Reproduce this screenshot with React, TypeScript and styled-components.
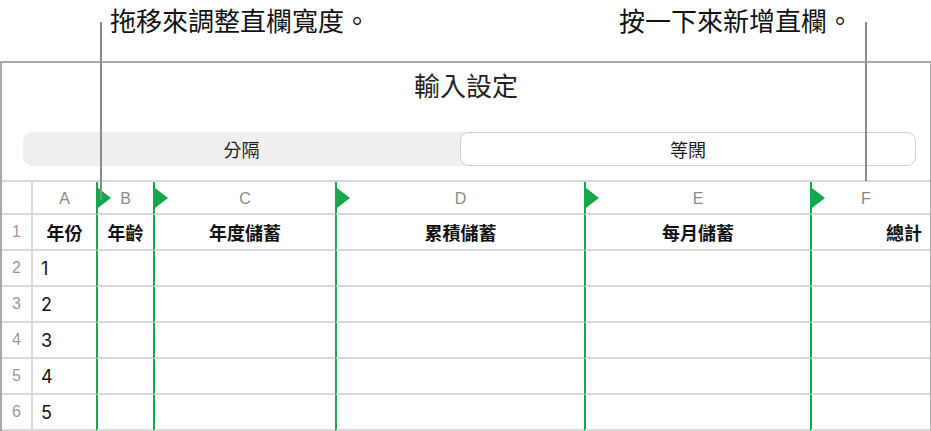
import { Fragment } from "react";
import styled, { createGlobalStyle } from "styled-components";

const GlobalStyle = createGlobalStyle`
  * {
    box-sizing: border-box;
  }
  body {
    margin: 0;
    background: #ffffff;
    font-family: "Inter", "Noto Sans CJK TC", sans-serif;
  }
`;

const CJK = `"Noto Sans CJK TC", "Noto Sans CJK SC", sans-serif`;
const GREEN = "#16a64b";
const GRID_LINE = "#d9d9d9";

const Page = styled.div`
  position: relative;
  width: 931px;
  height: 431px;
  overflow: hidden;
  display: flex;
  flex-direction: column;
`;

const Callouts = styled.div`
  height: 62px;
  display: flex;
  align-items: flex-start;
  justify-content: space-between;
  padding: 4px 78px 0 110px;
`;

const CalloutText = styled.div`
  font-family: ${CJK};
  font-size: 26px;
  line-height: 32px;
  color: #111;
`;

const Leader = styled.div<{ $left: number; $top: number; $height: number }>`
  position: absolute;
  left: ${p => p.$left}px;
  top: ${p => p.$top}px;
  width: 2px;
  height: ${p => p.$height}px;
  background: #8c8c8c;
  z-index: 5;
`;

const Panel = styled.div`
  flex: 1;
  display: flex;
  flex-direction: column;
  border-top: 2px solid #a9a9a9;
  border-left: 2px solid #a9a9a9;
  border-right: 1px solid #a9a9a9;
  background: #fff;
`;

const Title = styled.div`
  height: 69px;
  padding-top: 7px;
  text-align: center;
  font-family: ${CJK};
  font-size: 26px;
  line-height: 30px;
  color: #222;
`;

const Segmented = styled.div`
  margin: 0 14px 0 21px;
  height: 34px;
  display: grid;
  grid-template-columns: 437px 1fr;
  background: #efefef;
  border-radius: 9px;
`;

const Segment = styled.div<{ $active?: boolean }>`
  display: flex;
  align-items: center;
  justify-content: center;
  font-family: ${CJK};
  font-size: 18px;
  color: #1a1a1a;
  border-radius: 9px;
  background: ${p => (p.$active ? "#ffffff" : "transparent")};
  border: 1px solid ${p => (p.$active ? "#cfcfcf" : "transparent")};
`;

const Grid = styled.div`
  margin-top: 14px;
  border-top: 2px solid ${GRID_LINE};
  display: grid;
  grid-template-columns: 31px 63px 57px 182px 249px 226px 1fr;
  grid-template-rows: 33px 36px repeat(5, 36px);
`;

const Cell = styled.div<{ $marker?: boolean; $align?: "left" | "center" | "right" }>`
  position: relative;
  display: flex;
  align-items: center;
  justify-content: ${p =>
    p.$align === "left" ? "flex-start" : p.$align === "right" ? "flex-end" : "center"};
  padding: 0 8px;
  border-bottom: 2px solid ${GRID_LINE};
  border-left: ${p => (p.$marker ? `2px solid ${GREEN}` : "none")};
  min-width: 0;
  white-space: nowrap;
`;

const RowNum = styled(Cell)`
  padding: 0;
  border-right: 2px solid ${GRID_LINE};
  color: #999;
  font-family: "Liberation Sans", sans-serif;
  font-size: 16px;
`;

const ColLetter = styled(Cell)<{ $offset?: number }>`
  color: #8a8a8a;
  font-family: "Liberation Sans", sans-serif;
  font-size: 16px;
  padding-top: 2px;
  ${p => (p.$offset ? `justify-content: flex-start; padding-left: ${p.$offset}px;` : "")}
`;

const HeadLabel = styled(Cell)`
  font-family: ${CJK};
  font-weight: 700;
  font-size: 18px;
  color: #111;
`;

const Value = styled(Cell)`
  font-family: "Inter", sans-serif;
  font-size: 18px;
  color: #111;
  padding-left: 8px;
`;

// green resize handle on the left edge of each column header
const Handle = styled.span`
  position: absolute;
  left: 0;
  top: 50%;
  transform: translateY(-50%);
  width: 0;
  height: 0;
  border-left: 13px solid ${GREEN};
  border-top: 10px solid transparent;
  border-bottom: 10px solid transparent;
`;

const letters = ["A", "B", "C", "D", "E", "F"];
const labels = ["年份", "年齡", "年度儲蓄", "累積儲蓄", "每月儲蓄", "總計"];
const years = [1, 2, 3, 4, 5];

function App() {
  return (
    <>
      <GlobalStyle />
      <Page>
        <Callouts>
          <CalloutText>拖移來調整直欄寬度。</CalloutText>
          <CalloutText>按一下來新增直欄。</CalloutText>
        </Callouts>
        <Leader $left={100} $top={22} $height={178} />
        <Leader $left={865} $top={22} $height={159} />
        <Panel>
          <Title>輸入設定</Title>
          <Segmented>
            <Segment>分隔</Segment>
            <Segment $active>等闊</Segment>
          </Segmented>
          <Grid>
            <RowNum />
            {letters.map((l, i) => (
              <ColLetter key={l} $marker={i > 0} $offset={i === 5 ? 49 : 0}>
                {i > 0 && <Handle />}
                {l}
              </ColLetter>
            ))}

            <RowNum>1</RowNum>
            {labels.map((t, i) => (
              <HeadLabel key={t} $marker={i > 0} $align={i === 5 ? "right" : "center"}>
                {t}
              </HeadLabel>
            ))}

            {years.map(y => (
              <Fragment key={y}>
                <RowNum>{y + 1}</RowNum>
                <Value $align="left">{y}</Value>
                {letters.slice(1).map(l => (
                  <Cell key={l} $marker />
                ))}
              </Fragment>
            ))}
          </Grid>
        </Panel>
      </Page>
    </>
  );
}

export default App;
